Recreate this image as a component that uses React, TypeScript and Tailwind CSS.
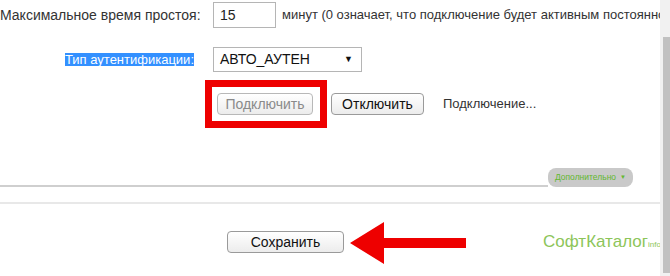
import React from 'react';

const font = { fontFamily: '"Liberation Sans", Arial, sans-serif' };

const btn =
  'shrink-0 h-[22px] rounded-[4px] border bg-gradient-to-b from-white to-[#ececec] text-[14px] leading-none flex items-center justify-center';

export default function App() {
  return (
    <div className="w-[670px] h-[276px] bg-white flex overflow-hidden relative text-[#333]" style={font}>
      <div className="flex-1 flex flex-col min-w-0">
        {/* row 1 */}
        <div className="flex items-center mt-[2px] h-[26px]">
          <div className="shrink-0 w-[194px] text-right text-[14px] whitespace-nowrap">Максимальное время простоя:</div>
          <div className="ml-[19px] w-[63px] h-[26px] border border-[#b5b5b5] flex items-center pl-[6px] text-[14px] text-[#222] shrink-0">
            15
          </div>
          <div className="ml-[6px] text-[13px] whitespace-nowrap overflow-hidden">
            минут (0 означает, что подключение будет активным постоянно)
          </div>
        </div>

        {/* row 2 */}
        <div className="flex items-center mt-[19px] h-[25px]">
          <div className="shrink-0 w-[194px] flex justify-end">
            <span className="bg-[#3390ff] text-white text-[13px] leading-[13px] h-[13px] whitespace-nowrap">
              Тип аутентификации:
            </span>
          </div>
          <div className="shrink-0 ml-[19px] w-[149px] h-[25px] border border-[#b5b5b5] flex items-center justify-between px-[6px] text-[14px] text-[#111]">
            <span>АВТО_АУТЕН</span>
            <span className="text-[9px] mr-[2px]">▼</span>
          </div>
        </div>

        {/* row 3 buttons */}
        <div className="flex items-center mt-[21px] h-[22px]">
          <div className={`${btn} ml-[217px] w-[96px] border-[#b8b8b8] text-[#8a8a8a]`}>Подключить</div>
          <div className={`${btn} ml-[18px] w-[93px] border-[#9a9a9a] text-[#111]`}>Отключить</div>
          <div className="ml-[19px] text-[13px] text-[#333] whitespace-nowrap">Подключение...</div>
        </div>

        {/* panel bottom */}
        <div className="flex items-end mt-[53px] h-[19px]">
          <div className="shrink-0 w-[548px] h-[2px] bg-[#cfcfcf]" />
          <div className="shrink-0 w-[85px] h-[19px] rounded-[8px] bg-[#c9c9c9] flex items-center justify-center gap-[4px] text-[8.5px] text-[#62b82f]">
            <span>Дополнительно</span>
            <span className="text-[6px]">▼</span>
          </div>
        </div>

        <div className="mt-[15px] h-[2px] bg-[#e8e8e8]" />

        {/* save row */}
        <div className="flex items-center mt-[27px] h-[22px]">
          <div className={`${btn} ml-[227px] w-[117px] border-[#9a9a9a] text-[#111]`}>Сохранить</div>
          <div className="shrink-0 ml-[199px] flex items-baseline text-[#8dc55a] whitespace-nowrap">
            <span className="text-[17px]">СофтКаталог</span>
            <span className="text-[8px]">info</span>
          </div>
        </div>
      </div>

      {/* scrollbar */}
      <div className="shrink-0 w-[10px] bg-[#f1f1f1] flex flex-col">
        <div className="mt-[37px] ml-[3px] w-[7px] h-[236px] bg-[#c1c1c1]" />
      </div>

      {/* annotations */}
      <div className="absolute left-[205px] top-[80px] w-[122px] h-[48px] border-[7px] border-[#ee0000]" />
      <svg className="absolute left-[350px] top-[222px]" width="117" height="42" viewBox="0 0 117 42">
        <polygon points="0,21 34,0 34,16 116,16 116,26 34,26 34,42" fill="#ee0000" />
      </svg>
    </div>
  );
}
